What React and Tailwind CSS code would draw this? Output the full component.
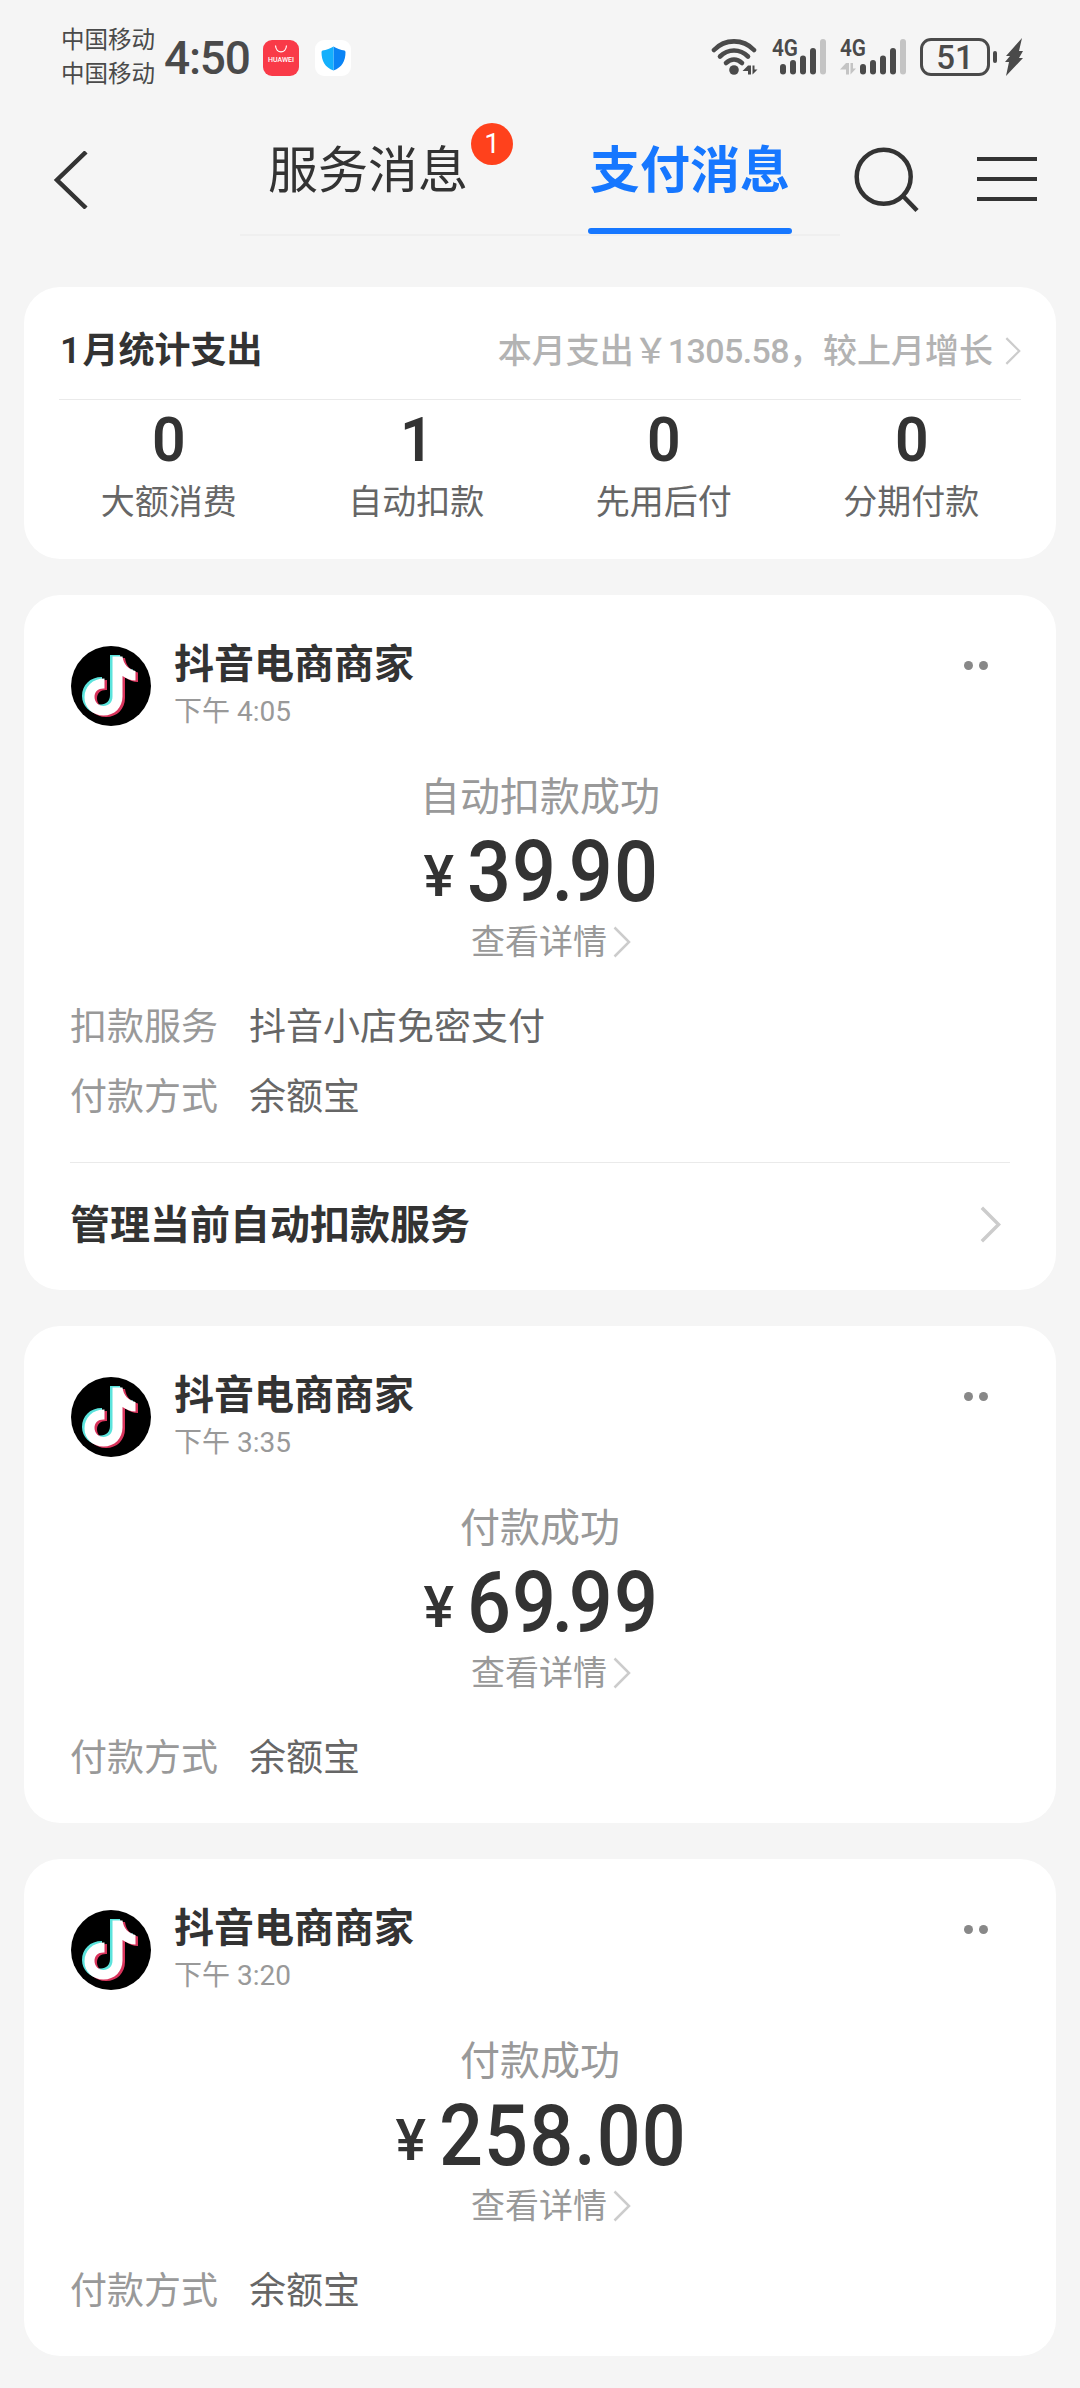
const MESSAGES = [
  {
    id: 1,
    time: '下午 4:05',
    status: '自动扣款成功',
    amount: '39.90',
    rows: [
      ['扣款服务', '抖音小店免密支付'],
      ['付款方式', '余额宝'],
    ],
    footer: '管理当前自动扣款服务',
  },
  { id: 2, time: '下午 3:35', status: '付款成功', amount: '69.99', rows: [['付款方式', '余额宝']] },
  { id: 3, time: '下午 3:20', status: '付款成功', amount: '258.00', rows: [['付款方式', '余额宝']] },
]

const STATS = [
  { value: 0, label: '大额消费' },
  { value: 1, label: '自动扣款' },
  { value: 0, label: '先用后付' },
  { value: 0, label: '分期付款' },
]

function Chevron({ className, strokeWidth = 2.5 }) {
  return (
    <svg className={className} viewBox="0 0 18 32" fill="none" stroke="currentColor" strokeWidth={strokeWidth}>
      <path d="M1.5 1.5L16 16L1.5 30.5" />
    </svg>
  )
}

function WifiIcon() {
  return (
    <svg className="w-12 h-10" viewBox="0 0 48 40" fill="none" stroke="#4a4a4a" strokeWidth="4.6" strokeLinecap="round">
      <path d="M3 13C14 1.500 32 1.500 43 13" />
      <path d="M9 19.500C17 11.500 29 11.500 37 19.500" />
      <path d="M15 26C20 21.500 26 21.500 31 26" />
      <circle cx="23" cy="33" r="4.800" fill="#4a4a4a" stroke="none" />
      <path d="M37 28.500V37.500H40V28.500ZM37 28.500L31.500 34H37ZM41.500 28.500V37.500L46.500 32.500H43.500V28.500Z" fill="#4a4a4a" stroke="none" />
    </svg>
  )
}

function Signal({ data }) {
  const x = data ? 21 : 9
  return (
    <svg className={data ? 'w-[68px] h-[50px] -mt-2.5' : 'w-[56px] h-[50px] -mt-2.5'} viewBox={data ? '0 -10 68 50' : '0 -10 56 50'}>
      <text x="0" y="19" fontSize="23" fontWeight="600" fill="#4a4a4a" textLength="26" lengthAdjust="spacingAndGlyphs" className="font-['Roboto',sans-serif]">4G</text>
      {data && (
        <path d="M6 26V37.500H9V26ZM6 26L0 32.500H6ZM10.500 26V37.500L16 31.500H13V26Z" fill="#c4c4c4" />
      )}
      <g strokeWidth="6" strokeLinecap="round" stroke="#4a4a4a">
        <path d={`M${x + 2} 30V34.500`} />
        <path d={`M${x + 12} 26V34.500`} />
        <path d={`M${x + 22} 21.500V34.500`} />
        <path d={`M${x + 32} 14V34.500`} />
        <path d={`M${x + 42} 5V34.500`} stroke="#c4c4c4" />
      </g>
    </svg>
  )
}

function StatusBar() {
  return (
    <div className="h-[110px] pt-[22px] pl-[61px] pr-[57px] flex items-start text-[#4a4a4a]">
      <div className="mt-[1px] w-[95px] text-[23.5px] leading-[34px]">
        <p>中国移动</p>
        <p>中国移动</p>
      </div>
      <p className="w-[88px] ml-2 mt-[8px] text-[46px] leading-[56px] font-medium tracking-[-1.2px]">4:50</p>
      <div className="mt-[18px] ml-[11px] w-9 h-9 rounded-[9px] bg-[#f93a48] flex flex-col items-center">
        <svg className="w-4 h-[18px] mt-0.5" viewBox="0 0 16 18" fill="none" stroke="#fff" strokeWidth="1.2">
          <path d="M2.500 3.500C3 12 13 12 13.500 3.500" />
        </svg>
        <span className="-mt-1 text-[7px] leading-[8px] font-medium text-white">HUAWEI</span>
      </div>
      <div className="mt-[18px] ml-4 w-9 h-9 rounded-[9px] bg-white flex items-center justify-center">
        <svg className="w-[25px] h-[25px]" viewBox="0 0 25 25">
          <path d="M12.500 0.500C15 2 20 4 23.500 4.500Q24.500 5 24.500 6C24.500 15 21 21.500 12.500 24.500Z" fill="#0a84f5" />
          <path d="M12.500 0.500C10 2 5 4 1.500 4.500Q0.500 5 0.500 6C0.500 15 4 21.500 12.500 24.500Z" fill="#14b0fc" />
        </svg>
      </div>
      <div className="ml-auto mt-[15px] flex">
        <WifiIcon />
        <div className="ml-[13px]"><Signal /></div>
        <div className="ml-3"><Signal data /></div>
        <div className="ml-[12px] mt-px w-[70px] h-[38px] rounded-[11px] border-[3px] border-[#4a4a4a] text-[33px] leading-[33px] font-medium text-center">51</div>
        <div className="ml-[3px] mt-[14px] w-1 h-3 rounded-full bg-[#4a4a4a]" />
        <svg className="ml-2 w-[18px] h-10" viewBox="0 0 18 40" fill="#4a4a4a">
          <path d="M17 1L1 19H5L0 25H4L1 39L18 21H14L18 14H14Z" />
        </svg>
      </div>
    </div>
  )
}

function NavBar() {
  return (
    <div className="h-[177px] flex items-start text-[#333]">
      <svg className="mt-[41px] ml-[53px] w-9 h-[58px]" viewBox="0 0 36 58" fill="none" stroke="#333" strokeWidth="4.5">
        <path d="M33 1L4 29L33 57" />
      </svg>
      <div className="ml-[151px] w-[600px] h-[126px] flex items-start border-b-2 border-[#efefef]">
        <div className="relative ml-[28px] mt-[26px] text-[50px] leading-[70px]">
          服务消息
          <span className="absolute left-[203px] -top-[13px] w-[42px] h-[42px] rounded-full bg-[#ff411c] text-white text-[28px] leading-[42px] text-center">1</span>
        </div>
        <div className="ml-[120px] mt-[26px] w-[204px] text-[50px] leading-[70px] font-bold text-[#1677ff] text-center">
          支付消息
          <div className="mt-[22px] h-[6px] rounded-full bg-[#1677ff]" />
        </div>
      </div>
      <svg className="mt-[36px] ml-[13px] w-[68px] h-[68px]" viewBox="0 0 68 68" fill="none" stroke="#333" strokeWidth="4.5">
        <circle cx="30.700" cy="30.700" r="27" />
        <path d="M50 50L64 64.500" />
      </svg>
      <div className="mt-[47px] ml-[56px] w-[60px] flex flex-col gap-[16px]">
        <div className="h-[4px] bg-[#333]" />
        <div className="h-[4px] bg-[#333]" />
        <div className="h-[4px] bg-[#333]" />
      </div>
    </div>
  )
}

function SummaryCard() {
  return (
    <section className="h-[272px] rounded-[36px] bg-white">
      <div className="mx-[35px] h-[113px] pt-[15px] flex items-center justify-between border-b border-[#eaeaea]">
        <h2 className="pl-px text-[36px] leading-[50px] font-bold text-[#333]">
          <span className="mr-[2px] font-semibold">1</span>月统计支出
        </h2>
        <div className="flex items-center text-[34px] leading-[50px] font-medium text-[#b3b3b3]">
          <span>本月支出￥<span className="tracking-[-0.6px]">1305.58</span>，较上月增长</span>
          <Chevron className="ml-[12px] w-4 h-[30px] text-[#ccc]" />
        </div>
      </div>
      <div className="mx-[21px] grid grid-cols-4 text-center">
        {STATS.map((s) => (
          <div key={s.label}>
            <p className="pt-[5px] text-[62px] leading-[70px] font-semibold text-[#333] scale-x-95">{s.value}</p>
            <p className="pt-[1.5px] text-[34px] leading-[50px] text-[#666]">{s.label}</p>
          </div>
        ))}
      </div>
    </section>
  )
}

function DouyinAvatar() {
  const note = 'M41 10H51C52 18 57 23 64 24.500V34C59 34 55 32 51 29.500V50C51 61 43 69 32 69C21 69 13 61 13 51C13 40 21 32 33 32V42C27 41.500 23 45 23 50.500C23 55.500 27 59.500 32 59.500C37 59.500 41 56 41 50Z'
  return (
    <svg className="w-20 h-20 rounded-full bg-black" viewBox="0 0 80 80">
      <path d={note} fill="#5be3dc" transform="translate(-2 -1)" />
      <path d={note} fill="#d8345c" transform="translate(3 2)" />
      <path d={note} fill="#fff" transform="translate(0.500 0.500)" />
    </svg>
  )
}

function Amount({ value }) {
  // a 9 leaves room under its bowl, so the point is tucked in
  const parts = value.split(/(9\.)/)
  return (
    <p className="flex items-baseline justify-center h-[90px] pl-[5px] leading-[87px] font-medium text-[#333] scale-x-90">
      <span className="relative -top-[5px] text-[58px] scale-x-110">¥</span>
      <span className="ml-[16px] text-[86px] tracking-[1.2px]">
        {parts.map((part, i) => (
          part === '9.' ? <span key={i} className="tracking-[-4.8px]">{part}</span> : part
        ))}
      </span>
    </p>
  )
}

function MessageCard({ message }) {
  return (
    <section className="rounded-[36px] bg-white">
      <div className="h-[168px] pt-[51px] pl-[47px] pr-[68px] flex items-start">
        <DouyinAvatar />
        <div className="ml-[23px] -mt-[6px]">
          <h3 className="text-[40px] leading-[50px] font-bold text-[#333]">抖音电商商家</h3>
          <p className="text-[28px] leading-[44px] text-[#999]">{message.time}</p>
        </div>
        <div className="ml-auto mt-[15px] flex gap-[6px]">
          <span className="w-[9px] h-[9px] rounded-full bg-[#888]" />
          <span className="w-[9px] h-[9px] rounded-full bg-[#888]" />
        </div>
      </div>

      <div className="flex flex-col items-center">
        <p className="mt-[5px] text-[40px] leading-[60px] text-[#999]">{message.status}</p>
        <Amount value={message.amount} />
        <p className="-mt-px pl-[22px] flex items-center text-[34px] leading-[50px] text-[#999]">
          查看详情
          <Chevron className="ml-[6px] w-[18px] h-8 text-[#ccc]" />
        </p>
      </div>

      <div className="pl-[46px] pt-[26px] pb-[29px] text-[37px] leading-[70px]">
        {message.rows.map(([label, value]) => (
          <div key={label} className="flex">
            <span className="w-[179px] text-[#999]">{label}</span>
            <span className="text-[#666]">{value}</span>
          </div>
        ))}
      </div>

      {message.footer && (
        <div className="mx-[46px] h-[128px] border-t border-[#eaeaea] flex items-start justify-between pt-[33px] pr-[9px] text-[40px] leading-[60px] font-bold text-[#333]">
          {message.footer}
          <Chevron className="mt-[10px] w-[21px] h-[37px] text-[#ccc]" strokeWidth={3} />
        </div>
      )}
    </section>
  )
}

function App() {
  return (
    <div className="w-[1080px] h-[2388px] overflow-hidden bg-[#f5f5f5] font-['Roboto','Noto_Sans_CJK_SC',sans-serif]">
      <StatusBar />
      <NavBar />
      <main className="px-6 flex flex-col gap-9">
        <SummaryCard />
        {MESSAGES.map((m) => (
          <MessageCard key={m.id} message={m} />
        ))}
      </main>
    </div>
  )
}

export default App
